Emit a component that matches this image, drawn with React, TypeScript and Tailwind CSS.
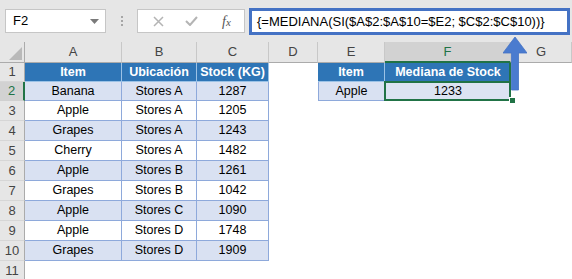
import React from "react";

type Row = { n: number; a?: string; b?: string; c?: string; e?: string; f?: string };

const rows: Row[] = [
  { n: 1, a: "Item", b: "Ubicación", c: "Stock (KG)", e: "Item", f: "Mediana de Stock" },
  { n: 2, a: "Banana", b: "Stores A", c: "1287", e: "Apple", f: "1233" },
  { n: 3, a: "Apple", b: "Stores A", c: "1205" },
  { n: 4, a: "Grapes", b: "Stores A", c: "1243" },
  { n: 5, a: "Cherry", b: "Stores A", c: "1482" },
  { n: 6, a: "Apple", b: "Stores B", c: "1261" },
  { n: 7, a: "Grapes", b: "Stores B", c: "1042" },
  { n: 8, a: "Apple", b: "Stores C", c: "1090" },
  { n: 9, a: "Apple", b: "Stores D", c: "1748" },
  { n: 10, a: "Grapes", b: "Stores D", c: "1909" },
  { n: 11 },
];

const cols = ["A", "B", "C", "D", "E", "F", "G"];

function tableCell(r: Row, text: string | undefined) {
  if (r.n === 1) {
    return "flex items-center justify-center border-r border-b border-[#9bc2e6] bg-[#2e75b6] font-bold text-white";
  }
  const band = r.n % 2 === 0 ? "bg-[#d9e1f2]" : "bg-white";
  return `flex items-center justify-center border-r border-b border-[#8ea9db] ${band} text-black`;
}

export default function App() {
  return (
    <div className="relative h-[279px] w-[572px] overflow-hidden bg-white font-['Liberation_Sans',Arial,sans-serif]">
      {/* Top bar */}
      <div className="flex h-[42px] items-start bg-[#e6e6e6]">
        <div className="ml-[5px] mt-[9px] flex h-[24px] w-[101px] items-center justify-between border border-[#c6c6c6] bg-white pl-[7px] pr-[6px] text-[13px] text-black">
          <span>F2</span>
          <svg width="9" height="5" viewBox="0 0 9 5">
            <path d="M0 0h9L4.5 5z" fill="#7a7a7a" />
          </svg>
        </div>
        <div className="ml-[15px] mt-[16px] flex flex-col gap-[2px]">
          <div className="h-[2px] w-[2px] bg-[#a6a6a6]" />
          <div className="h-[2px] w-[2px] bg-[#a6a6a6]" />
          <div className="h-[2px] w-[2px] bg-[#a6a6a6]" />
        </div>
        <div className="ml-[14px] mt-[9px] flex h-[24px] w-[108px] items-center border border-[#c6c6c6] bg-white">
          <svg className="ml-[15px]" width="11" height="11" viewBox="0 0 11 11">
            <path d="M1 1L10 10M10 1L1 10" stroke="#b4b4b4" strokeWidth="1.5" fill="none" />
          </svg>
          <svg className="ml-[21px]" width="13" height="10" viewBox="0 0 13 10">
            <path d="M1 5L5 9L12 1" stroke="#b4b4b4" strokeWidth="2" fill="none" />
          </svg>
          <span className="ml-[24px] font-['Liberation_Serif',serif] text-[14px] italic text-[#555]">
            f<span className="text-[11px]">x</span>
          </span>
        </div>
        <div className="ml-[4px] mt-[8px] flex h-[27px] w-[321px] items-center border-[3px] border-[#4472c4] bg-white pl-[5px] text-[13px] text-black">
          {"{=MEDIANA(SI($A$2:$A$10=$E2; $C$2:$C$10))}"}
        </div>
      </div>

      {/* Sheet */}
      <div className="grid grid-cols-[25px_97px_75px_72px_49px_67px_126px_1fr] text-[12.5px]">
        {/* Column headers */}
        <div className="relative h-[21px] border-r border-b border-[#ababab] bg-[#e6e6e6]">
          <svg className="absolute left-[9px] top-[5px]" width="13" height="13" viewBox="0 0 13 13">
            <path d="M13 0V13H0z" fill="#b9b9b9" />
          </svg>
        </div>
        {cols.map((c) => (
          <div
            key={c}
            className={
              c === "F"
                ? "flex h-[21px] items-center justify-center border-r border-b-2 border-r-[#c8c8c8] border-b-[#217346] bg-[#d2d2d2] text-[13px] text-[#217346]"
                : "flex h-[21px] items-center justify-center border-r border-b border-r-[#c8c8c8] border-b-[#ababab] bg-[#e6e6e6] text-[13px] text-[#444]"
            }
          >
            {c}
          </div>
        ))}

        {rows.map((r) => {
          const h = r.n <= 2 ? "h-[19px]" : "h-[20px]";
          return (
            <React.Fragment key={r.n}>
              <div
                className={
                  r.n === 2
                    ? `${h} flex items-center justify-center border-r-2 border-b border-r-[#217346] border-b-[#d0d0d0] bg-[#d2d2d2] text-[13px] text-[#217346]`
                    : `${h} flex items-center justify-center border-r border-b border-r-[#ababab] border-b-[#d6d6d6] bg-[#e6e6e6] text-[13px] text-[#444]`
                }
              >
                {r.n}
              </div>
              {r.n <= 10 ? (
                <>
                  <div className={`${h} ${tableCell(r, r.a)}`}>{r.a}</div>
                  <div className={`${h} ${tableCell(r, r.b)}`}>{r.b}</div>
                  <div className={`${h} ${tableCell(r, r.c)}`}>{r.c}</div>
                </>
              ) : (
                <>
                  <div className={h} />
                  <div className={h} />
                  <div className={h} />
                </>
              )}
              <div className={h} />
              {r.n === 1 ? (
                <>
                  <div className={`${h} flex items-center justify-center border-r border-b border-[#9bc2e6] bg-[#2e75b6] font-bold text-white`}>
                    {r.e}
                  </div>
                  <div className={`${h} relative flex items-center justify-center border-b border-[#9bc2e6] bg-[#2e75b6] font-bold text-white`}>
                    {r.f}
                    <div className="absolute right-0 top-0 h-full w-[2px] bg-[#217346]" />
                  </div>
                </>
              ) : r.n === 2 ? (
                <>
                  <div className={`${h} flex items-center justify-center border-x border-b border-[#8ea9db] bg-[#d9e1f2] text-black`}>
                    {r.e}
                  </div>
                  <div className={`${h} relative flex items-center justify-center bg-[#dce3f2] text-black`}>
                    {r.f}
                    <div className="absolute -left-[1px] -top-[1px] bottom-0 right-0 border-2 border-[#217346]" />
                  </div>
                </>
              ) : (
                <>
                  <div className={h} />
                  <div className={h} />
                </>
              )}
              <div className={h} />
            </React.Fragment>
          );
        })}
      </div>

      {/* Fill handle */}
      <div className="absolute left-[509px] top-[97px] h-[7px] w-[7px] border border-white bg-[#217346]" />

      {/* Arrow */}
      <svg className="absolute left-[503px] top-[37px]" width="24" height="54" viewBox="0 0 24 54">
        <path d="M12 0L24 16H15.5V53H8.5V16H0z" fill="#4a7bcf" stroke="#4472c4" strokeWidth="0.8" />
      </svg>
    </div>
  );
}
